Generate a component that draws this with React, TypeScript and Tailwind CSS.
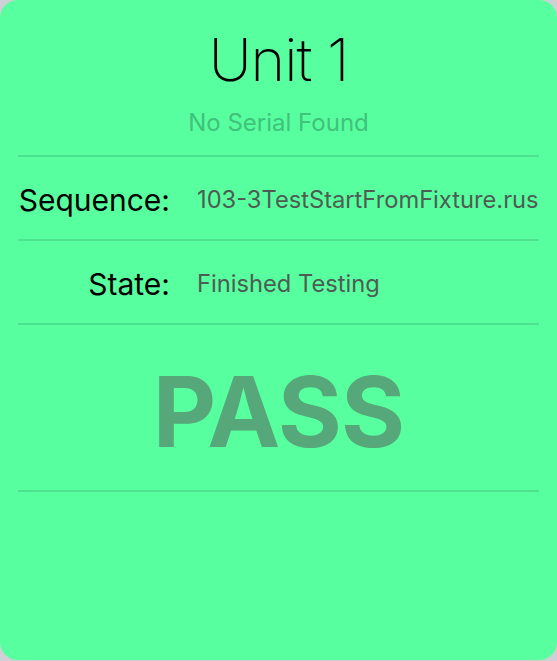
export default function App() {
  return (
    <div className="h-[661px] w-[557px] bg-[#cfcfd6] font-['Inter',sans-serif]">
      <div className="flex h-[660px] w-full flex-col rounded-[18px] bg-[#58ff9e] px-[18px]">
        <h1 className="pt-[27px] text-center text-[59px] leading-[66px] font-extralight tracking-[-1px] text-black">
          Unit 1
        </h1>
        <p className="mt-[15px] text-center text-[24px] leading-[30px] text-[#3fc27a]">
          No Serial Found
        </p>
        <div className="mt-[17px] h-[2px] bg-[#4de38e]" />
        <div className="flex h-[82px] items-center whitespace-nowrap pt-[4px]">
          <span className="w-[152px] shrink-0 text-right text-[30px] text-black">Sequence:</span>
          <span className="ml-[27px] text-[23.7px] text-[#4d5d54]">103-3TestStartFromFixture.rus</span>
        </div>
        <div className="h-[2px] bg-[#4de38e]" />
        <div className="flex h-[82px] items-center whitespace-nowrap pt-[4px]">
          <span className="w-[152px] shrink-0 text-right text-[30px] text-black">State:</span>
          <span className="ml-[27px] text-[23.7px] text-[#4d5d54]">Finished Testing</span>
        </div>
        <div className="h-[2px] bg-[#4de38e]" />
        <div className="flex h-[165px] items-center justify-center pt-[8px]">
          <span className="text-[98px] leading-none font-bold tracking-[-1px] text-[#56a87a]">PASS</span>
        </div>
        <div className="h-[2px] bg-[#4de38e]" />
      </div>
    </div>
  );
}
